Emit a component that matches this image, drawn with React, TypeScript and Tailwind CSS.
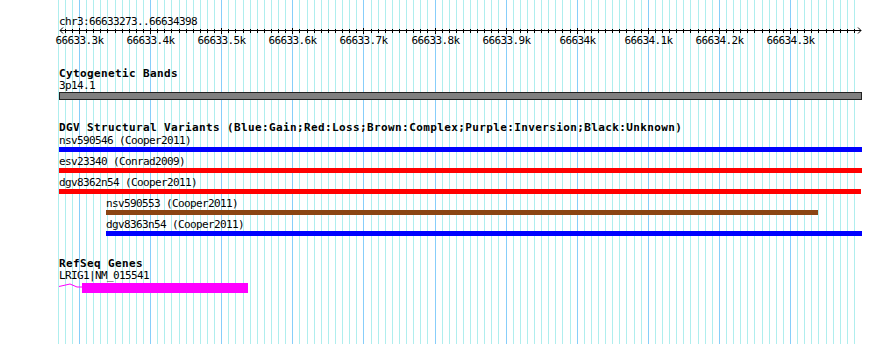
import React from "react";

const START = 66633280;
const END = 66634390;
const toX = (bp: number) => Math.round(79 + (bp - 66633300) * 0.711);

const gridBps: number[] = [];
for (let bp = START; bp <= END; bp += 10) gridBps.push(bp);

function Grid() {
  return (
    <svg className="absolute inset-0" width={890} height={344} shapeRendering="crispEdges">
      <line x1={58.5} x2={58.5} y1={0} y2={344} stroke="#afeeee" />
      {gridBps.map((bp) => (
        <line
          key={bp}
          x1={toX(bp) + 0.5}
          x2={toX(bp) + 0.5}
          y1={0}
          y2={344}
          stroke={bp % 100 === 0 ? "#87cefa" : "#afeeee"}
        />
      ))}
    </svg>
  );
}

function Ruler() {
  return (
    <svg width={890} height={18} className="block overflow-visible" shapeRendering="crispEdges">
      <line x1={60} x2={861} y1={2.5} y2={2.5} stroke="#000" />
      <polyline points="63,-0.5 60,2.5 63,5.5" fill="none" stroke="#000" shapeRendering="auto" />
      <polyline points="858,-0.5 861,2.5 858,5.5" fill="none" stroke="#000" shapeRendering="auto" />
      {gridBps.map((bp) => {
        const major = bp % 100 === 0;
        return (
          <line
            key={bp}
            x1={toX(bp) + 0.5}
            x2={toX(bp) + 0.5}
            y1={major ? 0 : 1}
            y2={major ? 6 : 5}
            stroke="#000"
          />
        );
      })}
      {gridBps
        .filter((bp) => bp % 100 === 0)
        .map((bp) => (
          <text
            key={bp}
            x={toX(bp) + 0.5}
            y={16}
            textAnchor="middle"
            fontFamily="DejaVu Sans Mono"
            fontSize={11}
            letterSpacing={-0.62}
            fill="#000"
          >
            {bp % 1000 === 0 ? `${bp / 1000}k` : `${(bp / 1000).toFixed(1)}k`}
          </text>
        ))}
    </svg>
  );
}

function Title({ children }: { children: React.ReactNode }) {
  return (
    <div className="h-[12px] leading-[12px] text-[11px] font-bold tracking-[0.38px] whitespace-pre">
      {children}
    </div>
  );
}

function Label({ children, className = "" }: { children: React.ReactNode; className?: string }) {
  return (
    <div className={`h-[12px] leading-[12px] text-[11px] tracking-[-0.62px] whitespace-pre ${className}`}>
      {children}
    </div>
  );
}

const variants = [
  { name: "nsv590546 (Cooper2011)", color: "bg-[#0000ff]", ml: "ml-0", w: "w-[803px]" },
  { name: "esv23340 (Conrad2009)", color: "bg-[#ff0000]", ml: "ml-0", w: "w-[803px]" },
  { name: "dgv8362n54 (Cooper2011)", color: "bg-[#ff0000]", ml: "ml-0", w: "w-[802px]" },
  { name: "nsv590553 (Cooper2011)", color: "bg-[#8b4513]", ml: "ml-[47px]", w: "w-[712px]" },
  { name: "dgv8363n54 (Cooper2011)", color: "bg-[#0000ff]", ml: "ml-[47px]", w: "w-[756px]" },
];

export default function App() {
  return (
    <div className="relative w-[890px] h-[344px] bg-white overflow-hidden text-black font-['DejaVu_Sans_Mono',monospace]">
      <Grid />
      <div className="relative pt-[16px]">
        <Label className="pl-[59px]">chr3:66633273..66634398</Label>
        <Ruler />

        <div className="pl-[59px] mt-[22px]">
          <Title>Cytogenetic Bands</Title>
          <Label>3p14.1</Label>
          <div className="w-[803px] h-[8px] bg-[#808080] border border-[#222]" />
        </div>

        <div className="pl-[59px] mt-[22px]">
          <Title>DGV Structural Variants (Blue:Gain;Red:Loss;Brown:Complex;Purple:Inversion;Black:Unknown)</Title>
          <div className="flex flex-col gap-[4px] mt-[1px]">
            {variants.map((v) => (
              <div key={v.name} className={v.ml}>
                <Label>{v.name}</Label>
                <div className={`${v.w} h-[5px] ${v.color}`} />
              </div>
            ))}
          </div>
        </div>

        <div className="pl-[59px] mt-[22px]">
          <Title>RefSeq Genes</Title>
          <Label>LRIG1|NM_015541</Label>
          <div className="flex items-start mt-[1px]">
            <svg width={23} height={10} className="block">
              <polyline points="0,3.5 11,1 18,4 23,4" fill="none" stroke="#ff00ff" />
            </svg>
            <div className="w-[166px] h-[10px] bg-[#ff00ff]" />
          </div>
        </div>
      </div>
    </div>
  );
}
